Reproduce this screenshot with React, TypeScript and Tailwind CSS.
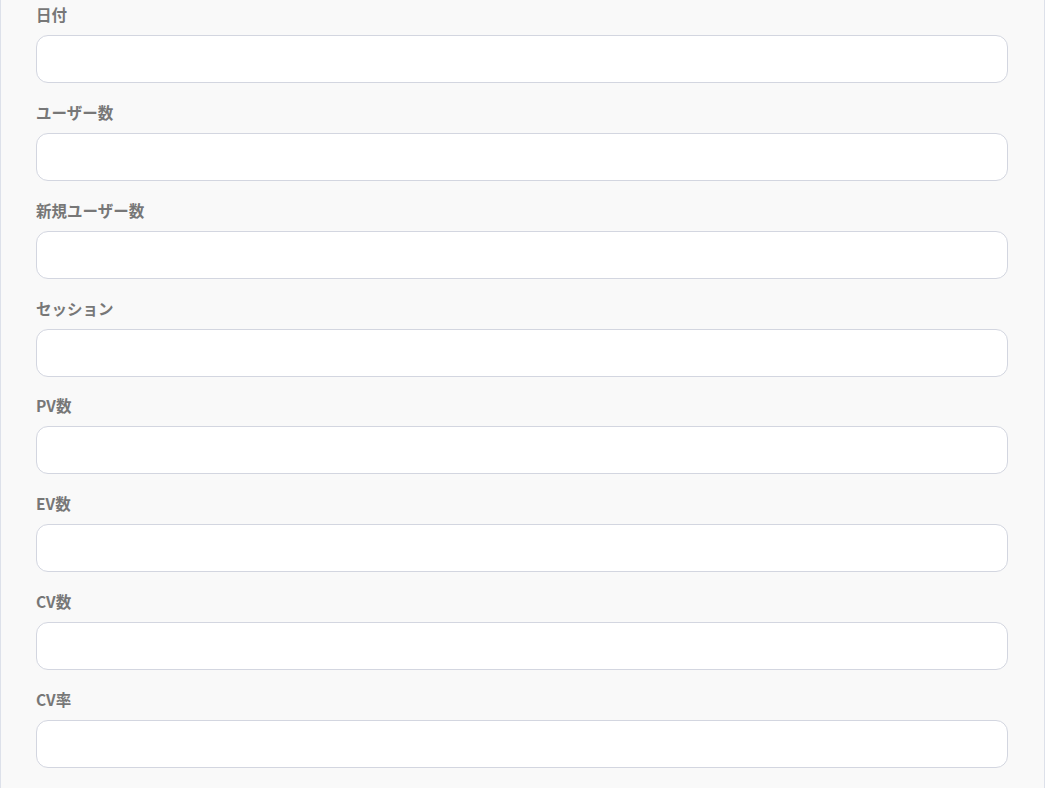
const fields = ['日付', 'ユーザー数', '新規ユーザー数', 'セッション', 'PV数', 'EV数', 'CV数', 'CV率']

export default function App() {
    return (
        <div className="min-h-screen w-full bg-white">
            <div
                className="w-[1045px] min-h-[788px] bg-[#f9f9f9] border-x border-[#dde1ea] pl-[35px] pr-[35px] pt-[3px]"
                style={{ fontFamily: '"Noto Sans CJK JP", "Noto Sans", sans-serif' }}
            >
                {fields.map((f) => (
                    <div key={f} className="mb-[17.85px]">
                        <label className="block text-[15.5px] leading-[22px] font-bold text-[#777777] mb-[10px]">{f}</label>
                        <input
                            type="text"
                            className="block w-[972px] h-[48px] bg-white border border-[#d3d6e0] rounded-xl px-4 outline-none"
                        />
                    </div>
                ))}
            </div>
        </div>
    )
}
